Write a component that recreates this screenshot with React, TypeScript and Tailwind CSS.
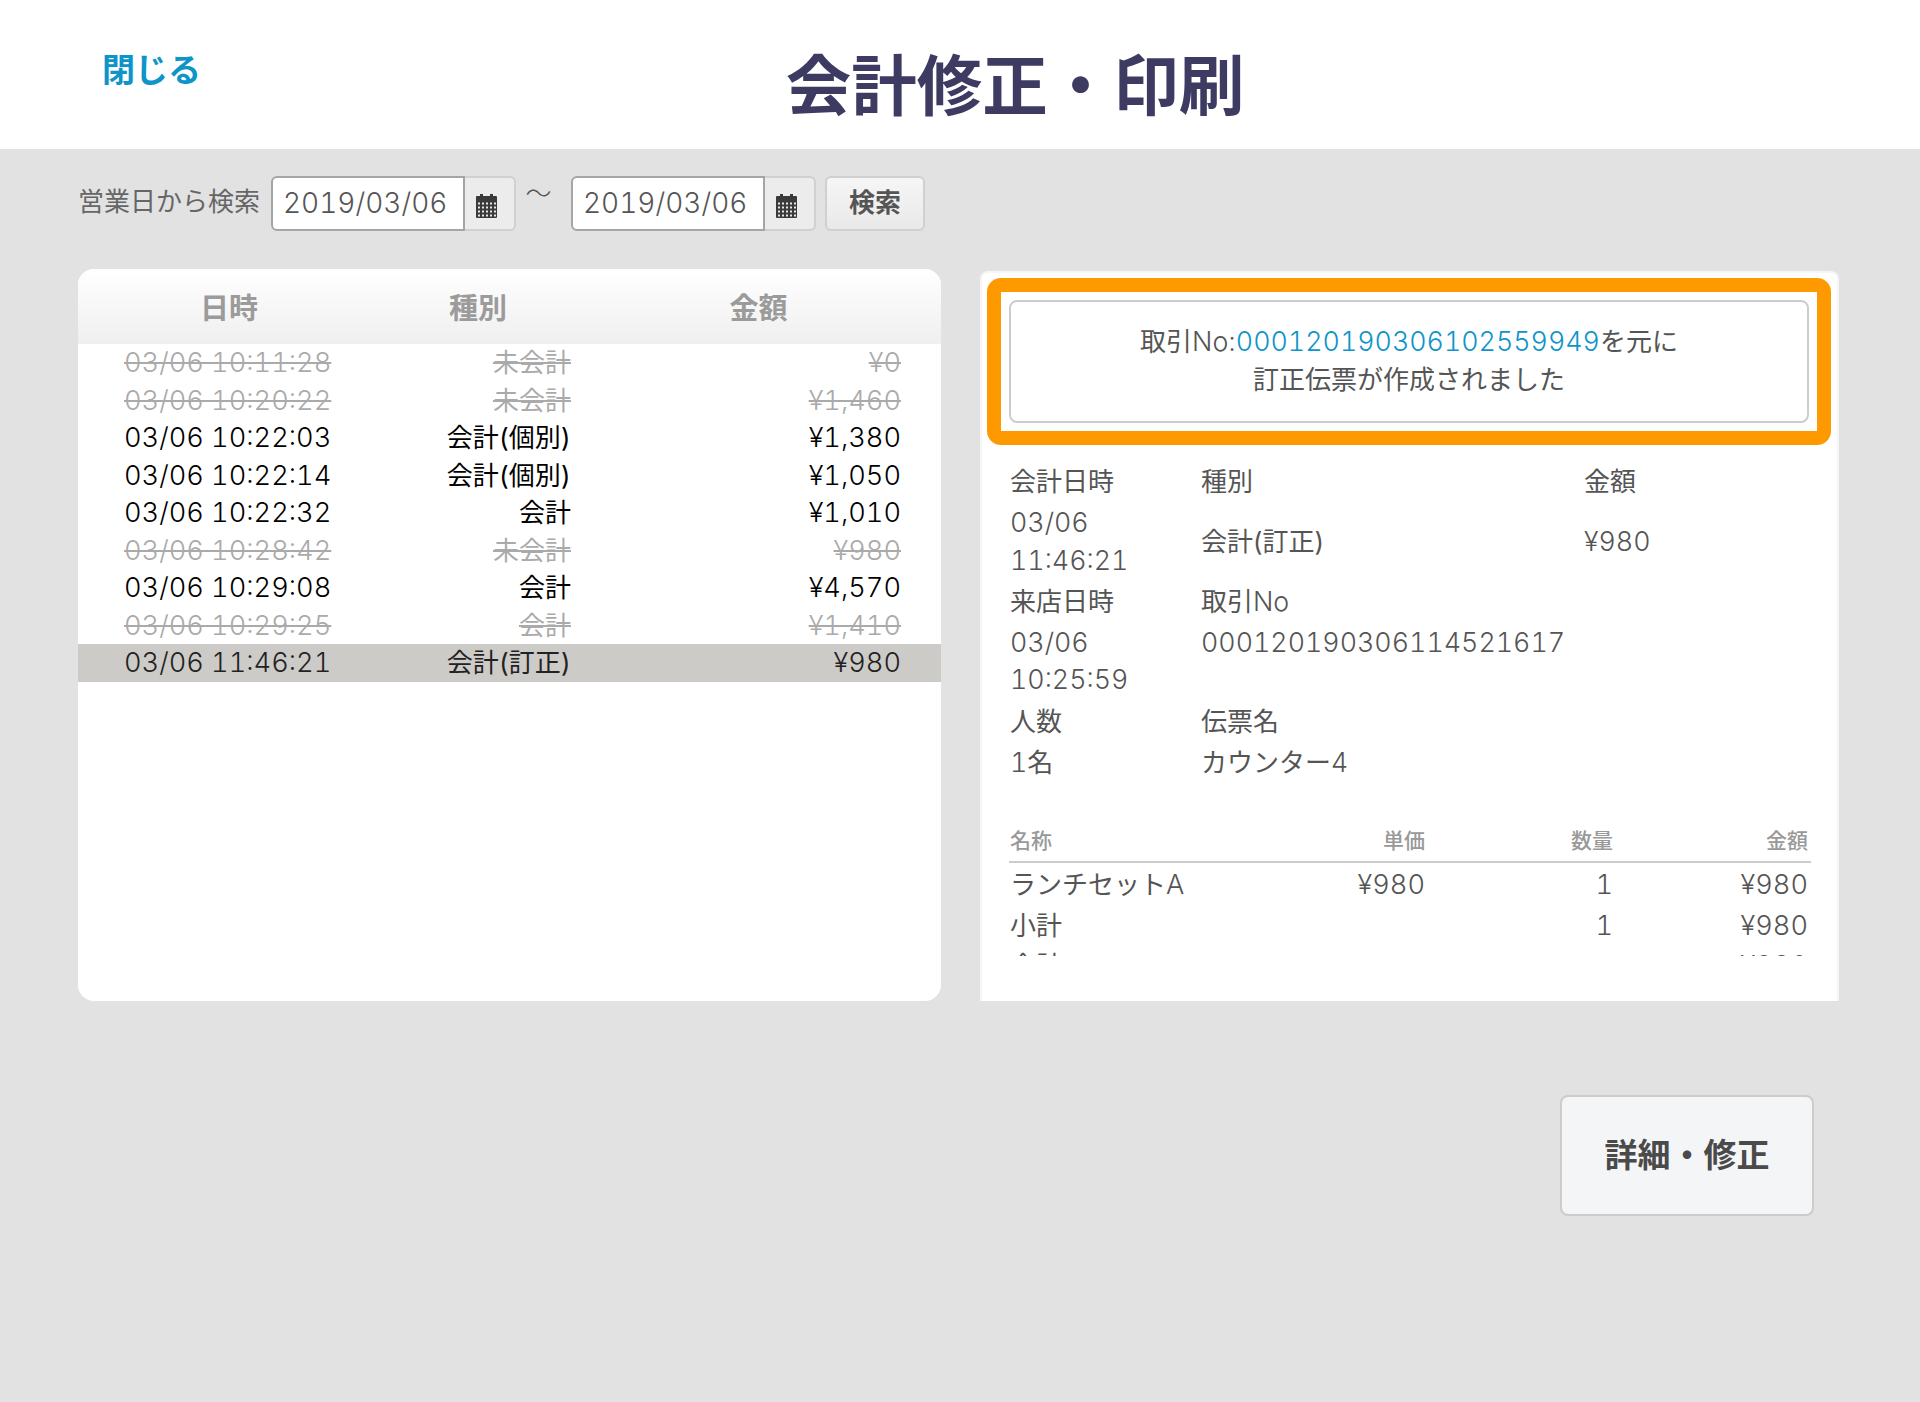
const rows = [
  { at: "03/06 10:11:28", kind: "未会計", price: "¥0", off: true },
  { at: "03/06 10:20:22", kind: "未会計", price: "¥1,460", off: true },
  { at: "03/06 10:22:03", kind: "会計(個別)", price: "¥1,380" },
  { at: "03/06 10:22:14", kind: "会計(個別)", price: "¥1,050" },
  { at: "03/06 10:22:32", kind: "会計", price: "¥1,010" },
  { at: "03/06 10:28:42", kind: "未会計", price: "¥980", off: true },
  { at: "03/06 10:29:08", kind: "会計", price: "¥4,570" },
  { at: "03/06 10:29:25", kind: "会計", price: "¥1,410", off: true },
  { at: "03/06 11:46:21", kind: "会計(訂正)", price: "¥980", selected: true },
];

const CalendarIcon = () => (
  <svg width="21" height="24" viewBox="0 0 21 24" fill="#3a3a3a">
    <rect x="4" y="0" width="3" height="4" />
    <rect x="14" y="0" width="3" height="4" />
    <rect x="0" y="2" width="21" height="22" rx="1" />
    <g fill="#e8e8e8">
      {[9, 13, 17, 21].map((y) =>
        [2, 6, 10, 14, 18].map((x) => <rect key={`${x}-${y}`} x={x} y={y - 0.5} width="2" height="2" />)
      )}
    </g>
  </svg>
);

const DateInput = () => (
  <div className="flex h-[55px]">
    <div className="flex w-[194px] items-center rounded-l-[6px] border-2 border-[#a5a5a5] bg-white pb-[2px] pl-[10px] text-[28px] text-[#555] tabular-nums">
      2019/03/06
    </div>
    <div className="flex w-[51px] items-center justify-center rounded-r-[6px] border-2 border-l-0 border-[#d0d0d0] bg-[#ececec] pt-[4px] pr-[7px]">
      <CalendarIcon />
    </div>
  </div>
);

export default function App() {
  return (
    <div className="min-h-[1402px] bg-[#e2e2e2] font-['Inter','Noto_Sans_CJK_JP',sans-serif] font-light">
      <header className="flex h-[149px] bg-white pl-[102px]">
        <a className="mt-[50px] h-[40px] w-[97px] shrink-0 text-[33px] leading-[40px] font-bold whitespace-nowrap text-[#0d94c9]">閉じる</a>
        <h1 className="mt-[45px] flex-1 pr-[89px] text-center text-[65.5px] leading-[84px] font-bold text-[#3e3b63]">会計修正・印刷</h1>
      </header>

      <main className="pr-[81px] pl-[78px]">
        <div className="mt-[27px] flex h-[55px] items-center">
          <span className="w-[193px] shrink-0 pb-[4px] text-[26px] leading-[36px] font-normal text-[#666]">営業日から検索</span>
          <DateInput />
          <span className="mb-[20px] w-[55px] pr-[10px] text-center text-[26px] leading-[36px] text-[#555]">〜</span>
          <DateInput />
          <button className="ml-[9px] h-[55px] w-[100px] rounded-[6px] border-2 border-[#d0d0d0] bg-gradient-to-b from-[#f6f6f6] to-[#e9e9e9] pb-[2px] text-[26px] font-bold text-[#555]">検索</button>
        </div>

        <div className="mt-[38px] grid grid-cols-[863px_859px] gap-[39px]">
          <section className="h-[732px] overflow-hidden rounded-[16px] bg-white">
            <div className="grid h-[75px] grid-cols-[302px_196px_1fr] items-center bg-gradient-to-b from-white to-[#efefef] pt-[4px] text-center text-[29px] font-bold text-[#9b9b9b]">
              <div>日時</div>
              <div>種別</div>
              <div>金額</div>
            </div>
            {rows.map((r) => (
              <div
                key={r.at}
                className={`grid h-[37.5px] grid-cols-[250px_197px_1fr] items-center pt-[1px] pr-[40px] pl-[46px] text-[27.2px] leading-[36px] tabular-nums ${
                  r.selected ? "bg-[#cdcbc7] text-[#222]" : r.off ? "text-[#aaa] line-through" : "text-black"
                }`}
              >
                <div>{r.at}</div>
                <div className="text-right text-[26px] font-normal">{r.kind}</div>
                <div className="text-right">{r.price}</div>
              </div>
            ))}
          </section>

          <section className="mt-[2px] h-[730px] rounded-t-[8px] border-2 border-b-0 border-[#f6f6f6] bg-white px-[5px] pt-[5px]">
            <div className="mr-[1px] rounded-[14px] border-[14px] border-[#ff9900] p-[8px]">
              <div className="flex h-[123px] flex-col items-center justify-center rounded-[8px] border-2 border-[#ccc] pb-[2px] text-[26px] leading-[38px] font-normal text-[#555]">
                <p>
                  取引<span className="text-[26.8px] font-light">No:</span>
                  <span className="text-[26.8px] font-light text-[#0d94c9] tabular-nums">000120190306102559949</span>を元に
                </p>
                <p>訂正伝票が作成されました</p>
              </div>
            </div>

            <div className="mt-[16px] h-[495px] overflow-hidden pr-[21px] pl-[22px] text-[26px] leading-[37.25px] text-[#555]">
              <div className="ml-[1px] grid grid-cols-[191px_383px_1fr] items-center [&>div]:py-[2px]">
                <div className="font-normal">会計日時</div>
                <div className="font-normal">種別</div>
                <div className="font-normal">金額</div>
                <div className="text-[26.8px] tabular-nums">03/06<br />11:46:21</div>
                <div className="font-normal">会計(訂正)</div>
                <div className="text-[26.8px] tabular-nums">¥980</div>
                <div className="font-normal">来店日時</div>
                <div className="font-normal">取引<span className="text-[26.8px] font-light">No</span></div>
                <div></div>
                <div className="text-[26.8px] tabular-nums">03/06<br />10:25:59</div>
                <div className="self-start text-[26.8px] tabular-nums">000120190306114521617</div>
                <div></div>
                <div className="font-normal">人数</div>
                <div className="font-normal">伝票名</div>
                <div></div>
                <div className="font-normal"><span className="text-[26.8px] font-light tabular-nums">1</span>名</div>
                <div className="font-normal">カウンター<span className="text-[26.8px] font-light">4</span></div>
                <div></div>
              </div>

              <div className="mt-[43px] grid grid-cols-[1fr_200px_188px_195px] border-b-2 border-[#ccc] pr-[3px] pb-[5px] pl-[1px] text-right text-[21px] leading-[30px] font-medium text-[#999]">
                <div className="text-left">名称</div>
                <div>単価</div>
                <div>数量</div>
                <div>金額</div>
              </div>
              {[
                ["ランチセット", "A", "¥980", "1", "¥980"],
                ["小計", "", "", "1", "¥980"],
                ["合計", "", "", "", "¥980"],
              ].map(([name, suffix, unit, qty, total]) => (
                <div key={name} className="grid h-[40.5px] grid-cols-[1fr_200px_188px_195px] items-center pt-[3px] pr-[3px] pl-[1px] text-right text-[27.2px] tabular-nums">
                  <div className="text-left text-[26px] font-normal">{name}<span className="text-[27.2px] font-light">{suffix}</span></div>
                  <div>{unit}</div>
                  <div>{qty}</div>
                  <div>{total}</div>
                </div>
              ))}
            </div>
          </section>
        </div>

        <div className="mt-[94px] flex justify-end pr-[25px]">
          <button className="h-[121px] w-[254px] rounded-[8px] border-2 border-[#ccc] bg-[#f4f5f7] text-[33px] font-bold text-[#4a4a4a]">詳細・修正</button>
        </div>
      </main>
    </div>
  );
}
